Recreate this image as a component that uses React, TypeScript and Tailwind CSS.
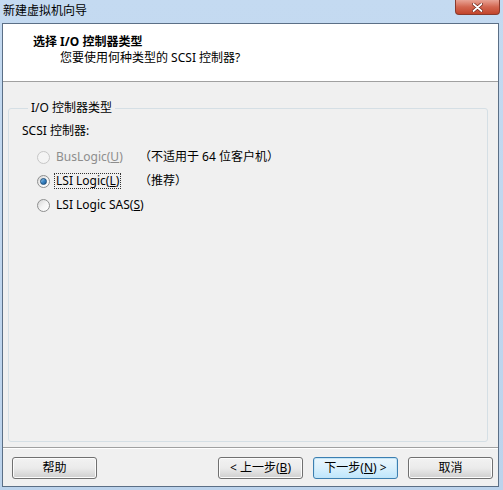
import React from 'react';

const font = { fontFamily: '"Noto Sans", "Noto Sans CJK SC", sans-serif' };

function Radio({ checked, disabled }: { checked?: boolean; disabled?: boolean }) {
  return (
    <span
      className={
        'flex h-[13px] w-[13px] shrink-0 items-center justify-center rounded-full border ' +
        (disabled
          ? 'border-[#c6c6c6] bg-[#f4f4f4]'
          : 'border-[#8e8f8f] bg-gradient-to-br from-[#d6d6d6] via-[#f4f4f4] to-[#ffffff]')
      }
    >
      {checked && (
        <span className="h-[7px] w-[7px] rounded-full border border-[#1b4d7a] bg-gradient-to-br from-[#9ccbec] via-[#3a85c4] to-[#1d5a96]" />
      )}
    </span>
  );
}

function Button({ children, primary }: { children: React.ReactNode; primary?: boolean }) {
  return (
    <button
      className={
        'flex h-[22px] w-[85px] items-center justify-center rounded-[3px] border text-[12px] text-black ' +
        (primary
          ? 'border-[#3c7fb1] bg-gradient-to-b from-[#eaf6fd] via-[#d9f0fc] to-[#bee6fd] shadow-[inset_0_0_0_1px_#c4e5f6]'
          : 'border-[#707070] bg-gradient-to-b from-[#f2f2f2] via-[#ebebeb] to-[#cfcfcf] shadow-[inset_0_0_0_1px_#fcfcfc]')
      }
    >
      {children}
    </button>
  );
}

export default function App() {
  const options = [
    { label: 'BusLogic', key: 'U', note: '（不适用于 64 位客户机）', disabled: true },
    { label: 'LSI Logic', key: 'L', note: '（推荐）', checked: true },
    { label: 'LSI Logic SAS', key: 'S', note: '' },
  ];

  return (
    <div
      style={font}
      className="flex h-[490px] w-[503px] flex-col bg-gradient-to-b from-[#c4daf1] to-[#bcd3ec] pb-[3px] pl-[2px] pr-[4px] text-[12px] leading-[16px] text-black"
    >
      {/* Title bar */}
      <div className="flex h-[23px] shrink-0 items-start justify-between">
        <span className="pl-[1px] pt-[3px] text-[12px] leading-[16px] text-black">新建虚拟机向导</span>
        <div className="mr-[-1px] flex h-[15px] w-[45px] items-center justify-center rounded-b-[4px] border border-t-0 border-[#8a3a2c] bg-gradient-to-b from-[#e8a395] via-[#d2654f] to-[#c2442a]">
          <svg width="11" height="9" viewBox="0 0 11 9">
            <path d="M1.5 1 L9.5 8 M9.5 1 L1.5 8" stroke="#6b2116" strokeWidth="3.2" strokeLinecap="round" />
            <path d="M1.5 1 L9.5 8 M9.5 1 L1.5 8" stroke="#ffffff" strokeWidth="1.8" strokeLinecap="round" />
          </svg>
        </div>
      </div>

      {/* Client area */}
      <div className="flex flex-1 flex-col border border-[#5b6f86] bg-[#f0f0f0]">
        {/* Header */}
        <div className="h-[58px] shrink-0 border-b border-[#a0a0a0] bg-white pl-[30px] pt-[10px]">
          <div className="font-bold">选择 I/O 控制器类型</div>
          <div className="pl-[27px]">您要使用何种类型的 SCSI 控制器?</div>
        </div>

        {/* Body */}
        <div className="flex flex-1 flex-col pt-[18px]">
          <fieldset className="ml-[5px] mr-[10px] flex-1 rounded-[3px] border border-[#d5dfe5] pl-[13px] pt-[7px]">
            <legend className="ml-[6px] px-[3px]">I/O 控制器类型</legend>
            <div>SCSI 控制器:</div>
            <div className="mt-[6px] grid grid-cols-[102px_auto] pl-[15px]">
              {options.map((o) => (
                <React.Fragment key={o.label}>
                  <div className="flex h-[24px] items-center gap-[4px] whitespace-nowrap">
                    <Radio checked={o.checked} disabled={o.disabled} />
                    <span
                      className={
                        'border px-[1px] leading-[14px] ' +
                        (o.checked ? 'border-dotted border-[#333]' : 'border-transparent') +
                        (o.disabled ? ' text-[#8d8d8d]' : '')
                      }
                    >
                      {o.label}(<span className="underline">{o.key}</span>)
                    </span>
                  </div>
                  <div className="flex h-[24px] items-center whitespace-nowrap">{o.note}</div>
                </React.Fragment>
              ))}
            </div>
          </fieldset>

          <div className="mt-[5px] h-[2px] shrink-0 border-t border-[#a0a0a0] bg-white" />

          <div className="mb-[7px] mt-[8px] flex h-[22px] shrink-0 items-center pl-[9px] pr-[5px]">
            <Button>帮助</Button>
            <div className="ml-auto flex gap-[10px]">
              <Button>
                &lt; 上一步(<span className="underline">B</span>)
              </Button>
              <Button primary>
                下一步(<span className="underline">N</span>) &gt;
              </Button>
              <Button>取消</Button>
            </div>
          </div>
        </div>
      </div>
    </div>
  );
}
